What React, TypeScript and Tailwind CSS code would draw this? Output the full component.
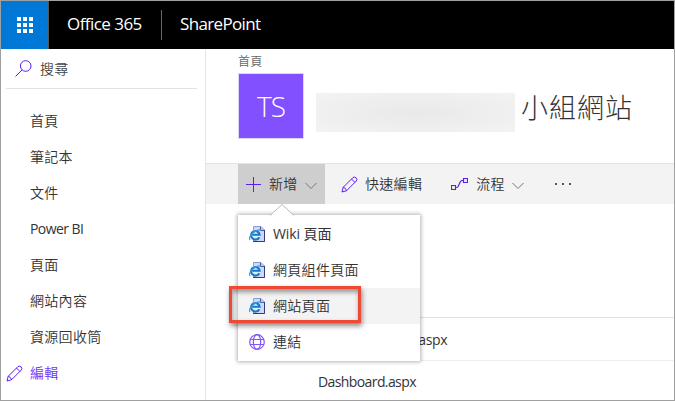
import React from "react";

const PURPLE = "#5b1ef0";

function Pencil() {
  return (
    <svg width="17" height="17" viewBox="0 0 17 17" fill="none" stroke={PURPLE} strokeWidth="1">
      <path d="M1 16l1.2-4.7L11.8 1.7q1.7-1.4 3.3.2 1.5 1.6.1 3.2L5.6 14.7z M2.2 11.3q2.5.4 3.4 3.4 M10.5 3l3.4 3.4" />
    </svg>
  );
}

function Chevron() {
  return (
    <svg width="12" height="8" viewBox="0 0 12 8" fill="none" stroke="#777" strokeWidth="1">
      <path d="M.5 1L6 6.5 11.5 1" />
    </svg>
  );
}

function PageIcon() {
  return (
    <svg width="16" height="16" viewBox="0 0 16 16">
      <path d="M4.5.5h7.5l3.5 3.5v11.5h-11z" fill="#cfd9f7" stroke="#8c9bd0" />
      <path d="M11.5.5v4h4" fill="#b9c6ef" stroke="#4c5ea5" />
      <path d="M15.5 4v11.5H4" fill="none" stroke="#303d80" />
      <circle cx="6.4" cy="8.8" r="5.4" fill="#d9f1ff" />
      <path d="M10.3 11.2A4.3 4.3 0 1 1 10.7 8.8H3.4" fill="none" stroke="#1977ca" strokeWidth="2.1" />
      <path d="M1.2 14C-1.4 11.6 4.4 4 11.6 3.6" fill="none" stroke="#3b9ade" strokeWidth="1.2" />
    </svg>
  );
}

function Globe() {
  return (
    <svg width="16" height="16" viewBox="0 0 16 16" fill="none" stroke="#8454f5" strokeWidth="1.2">
      <circle cx="8" cy="8" r="7.3" />
      <ellipse cx="8" cy="8" rx="3.7" ry="7.3" />
      <path d="M1 5.5h14M1 10.5h14" />
    </svg>
  );
}

const nav = ["首頁", "筆記本", "文件", "Power BI", "頁面", "網站內容", "資源回收筒"];
const menu = ["Wiki 頁面", "網頁組件頁面", "網站頁面", "連結"];

function NewMenu() {
  return (
    <div className="absolute left-0 top-[51px] z-10 h-[146px] w-[182px] bg-white shadow-[0_0_4px_1px_rgba(0,0,0,0.3)]">
      <svg className="absolute left-[32px] top-[-11px]" width="24" height="12" viewBox="0 0 24 12">
        <path d="M0 12L12 0.5 24 12z" fill="#fff" />
        <path d="M0 11.5L12 .5 24 11.5" fill="none" stroke="#bbb" strokeWidth="1" />
      </svg>
      <div className="flex flex-col pt-px">
        {menu.map((label, i) => (
          <div key={label} className={`flex h-9 items-center pl-[11px] ${i === 2 ? "bg-[#f3f3f3]" : ""}`}>
            {i === 3 ? <Globe /> : <PageIcon />}
            <span className={`ml-2 leading-5 ${i === 0 ? "font-normal tracking-[-0.1px]" : ""}`}>{label}</span>
          </div>
        ))}
      </div>
      <div className="absolute left-[-9px] top-[71px] h-[37px] w-[132px] border-[3px] border-[#ef4935] shadow-[1px_3px_5px_rgba(0,0,0,0.45),inset_1px_3px_5px_rgba(0,0,0,0.4)]" />
    </div>
  );
}

export default function App() {
  return (
    <div className="flex h-[401px] w-[675px] flex-col overflow-hidden border border-[#a0a0a0] bg-white font-['Open_Sans','Noto_Sans_CJK_TC',sans-serif] text-[14px] font-[350] tracking-[0.3px] text-[#333]">
      <header className="flex h-12 shrink-0 items-center bg-black font-normal text-white">
        <div className="flex h-12 w-[47px] items-center justify-center bg-[#0078d7]">
          <div className="grid grid-cols-3 gap-[2px]">
            {Array.from({ length: 9 }, (_, i) => (
              <i key={i} className="size-1 bg-white" />
            ))}
          </div>
        </div>
        <div className="h-12 w-px bg-[#555]" />
        <span className="-mt-[2px] ml-[18px] w-[94px] whitespace-nowrap text-[17px] tracking-[-0.55px]">Office 365</span>
        <div className="h-[30px] w-px bg-[#666]" />
        <span className="-mt-[2px] ml-[18px] text-[17px] tracking-[-0.65px]">SharePoint</span>
      </header>
      <div className="flex min-h-0 flex-1">
        <aside className="w-[205px] shrink-0 border-r border-[#e5e5e5]">
          <div className="ml-[5px] flex h-10 w-[191px] items-center border-b border-[#e2e2e2] pl-[9px]">
            <svg width="17" height="17" viewBox="0 0 17 17" fill="none" stroke={PURPLE}>
              <circle cx="10.7" cy="6" r="5.3" />
              <path d="M7 10L.5 16.5" />
            </svg>
            <span className="ml-2 leading-5 text-[#444]">搜尋</span>
          </div>
          <nav className="pt-[14px]">
            {nav.map((n) => (
              <div key={n} className={`flex h-9 items-center pl-[29px] leading-5 ${n === "Power BI" ? "font-normal tracking-[-0.55px]" : ""}`}>
                {n}
              </div>
            ))}
            <div className="flex h-9 items-center pl-[5px] text-[#6b35f5]">
              <Pencil />
              <span className="ml-[7px] leading-5">編輯</span>
            </div>
          </nav>
        </aside>
        <main className="flex min-w-0 flex-1 flex-col">
          <div className="h-[114px] shrink-0 pl-8">
            <div className="h-6 pt-[4px] text-[12px] leading-[18px] text-[#666]">首頁</div>
            <div className="flex">
              <div className="flex size-[66px] shrink-0 items-center justify-center border border-[#ddd6f4] bg-[#8250ff] font-['Open_Sans',sans-serif] text-[28px] font-light tracking-[-1px] text-white">
                TS
              </div>
              <div className="ml-3 mt-5 h-[39px] w-[199px] bg-[radial-gradient(ellipse_at_center,#e9e9e9,#f3f3f3)]" />
              <h1 className="ml-[6px] mt-[15px] whitespace-nowrap text-[27px] font-light leading-[40px] tracking-[1px]">小組網站</h1>
            </div>
          </div>
          <div className="flex h-[41px] shrink-0 border-t border-[#e2e2e2] bg-[#f3f3f3] pl-8">
            <div className="relative flex h-10 w-[87px] items-center bg-[#cecece] pl-2">
              <svg width="15" height="15" viewBox="0 0 15 15" stroke={PURPLE}>
                <path d="M7.5 0v15M0 7.5h15" />
              </svg>
              <span className="ml-2 leading-5">新增</span>
              <span className="ml-[7px] mt-[3px]"><Chevron /></span>
              <NewMenu />
            </div>
            <div className="ml-4 flex items-center">
              <Pencil />
              <span className="ml-[7px] leading-5">快速編輯</span>
            </div>
            <div className="ml-[29px] flex items-center">
              <svg width="17" height="14" viewBox="0 0 17 14" fill="none" stroke={PURPLE} strokeWidth="1.2">
                <path d="M.5 8.5h4v4h-4zM12.5 1.5h4v4h-4zM4.5 10.5H6c2 0 2.2-7 5-7h1.5" />
              </svg>
              <span className="ml-[8px] leading-5">流程</span>
              <span className="ml-[7px] mt-[3px]"><Chevron /></span>
            </div>
            <div className="ml-[31px] flex items-center gap-[5px]">
              <i className="size-[2px] bg-[#555]" />
              <i className="size-[2px] bg-[#555]" />
              <i className="size-[2px] bg-[#555]" />
            </div>
          </div>
          <div className="ml-8 mt-[113px] flex h-[43px] shrink-0 items-center border-t border-[#e2e2e2] pl-[177px] font-normal tracking-[-0.35px]">
            .aspx
          </div>
          <div className="ml-8 flex h-10 items-center border-t border-[#eee] pl-[80px] pt-[2px] font-normal tracking-[-0.6px]">
            Dashboard.aspx
          </div>
        </main>
      </div>
    </div>
  );
}
